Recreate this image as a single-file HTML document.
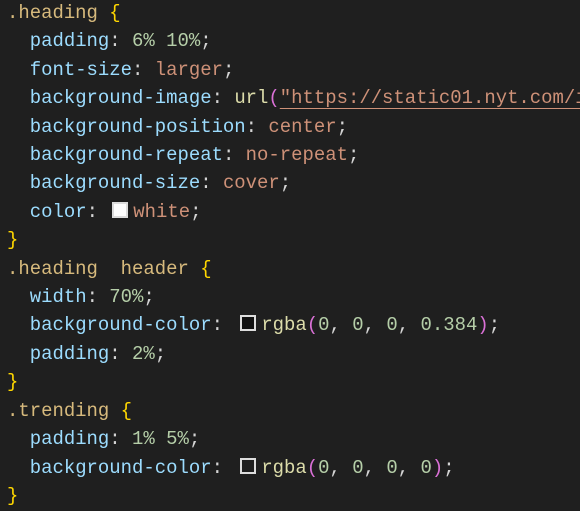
<!DOCTYPE html>
<html><head><meta charset="utf-8"><style>
html,body{margin:0;padding:0;background:#1f1f1f;width:580px;height:511px;overflow:hidden;position:relative}
pre{margin:0;position:absolute;top:-1px;left:7px;width:573px;overflow:hidden;font-family:"Liberation Mono",monospace;font-size:18.95px;line-height:28.4px;color:#d4d4d4;white-space:pre}
.s{color:#d7ba7d}.b{color:#ffd700}.p{color:#9cdcfe}.n{color:#b5cea8}.v{color:#ce9178}.f{color:#dcdcaa}.k{color:#da70d6}
.u{text-decoration:underline;text-decoration-color:#ce9178;text-underline-offset:5px}
.sw{display:inline-block;width:12px;height:12px;border:2px solid #ddd;vertical-align:-1px;margin:0 5px 0 6px;box-sizing:content-box}
</style></head><body><pre><span class="s">.heading</span> <span class="b">{</span>
  <span class="p">padding</span>: <span class="n">6% 10%</span>;
  <span class="p">font-size</span>: <span class="v">larger</span>;
  <span class="p">background-image</span>: <span class="f">url</span><span class="k">(</span><span class="v u">"https://static01.nyt.com/images</span>
  <span class="p">background-position</span>: <span class="v">center</span>;
  <span class="p">background-repeat</span>: <span class="v">no-repeat</span>;
  <span class="p">background-size</span>: <span class="v">cover</span>;
  <span class="p">color</span>: <span class="sw" style="background:#fff;margin-left:3px"></span><span class="v">white</span>;
<span class="b">}</span>
<span class="s">.heading  header</span> <span class="b">{</span>
  <span class="p">width</span>: <span class="n">70%</span>;
  <span class="p">background-color</span>: <span class="sw" style="background:#111"></span><span class="f">rgba</span><span class="k">(</span><span class="n">0</span>, <span class="n">0</span>, <span class="n">0</span>, <span class="n">0.384</span><span class="k">)</span>;
  <span class="p">padding</span>: <span class="n">2%</span>;
<span class="b">}</span>
<span class="s">.trending</span> <span class="b">{</span>
  <span class="p">padding</span>: <span class="n">1% 5%</span>;
  <span class="p">background-color</span>: <span class="sw" style="background:#1f1f1f"></span><span class="f">rgba</span><span class="k">(</span><span class="n">0</span>, <span class="n">0</span>, <span class="n">0</span>, <span class="n">0</span><span class="k">)</span>;
<span class="b">}</span></pre></body></html>
